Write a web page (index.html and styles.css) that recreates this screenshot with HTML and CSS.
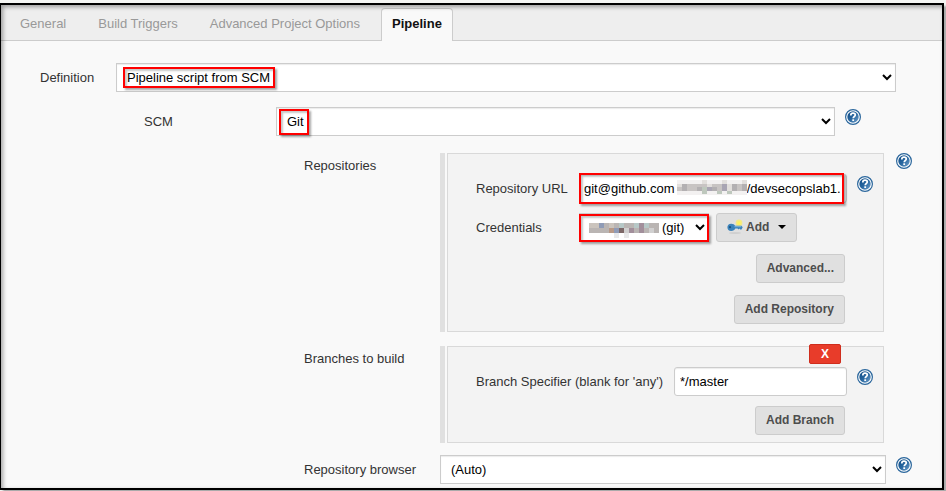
FILE: index.html
```html
<!DOCTYPE html>
<html lang="en">
<head>
<meta charset="utf-8">
<title>Pipeline configuration</title>
<link rel="stylesheet" href="styles.css">
</head>
<body>
<svg class="defs" aria-hidden="true">
  <defs>
    <linearGradient id="disc" x1="0" y1="0" x2="1" y2="1">
      <stop offset="0" stop-color="#0f4a83"/>
      <stop offset="0.5" stop-color="#2867a0"/>
      <stop offset="1" stop-color="#75a3cc"/>
    </linearGradient>
    <symbol id="help" viewBox="0 0 16 16">
      <circle cx="8" cy="8" r="7.4" fill="#fff" stroke="#2a669c" stroke-width="1.2"/>
      <circle cx="8" cy="8" r="5.7" fill="url(#disc)"/>
      <path d="M5.8 6.400C5.800 4.900 6.700 4.200 8 4.200s2.300.7 2.300 1.900C10.300 7.400 8.200 7.600 8.200 9.200" fill="none" stroke="#fff" stroke-width="1.700"/>
      <rect x="7.300" y="10.300" width="1.800" height="1.700" fill="#fff"/>
    </symbol>
  </defs>
</svg>
<main class="frame">
  <nav class="tabs">
    <a class="tab" href="#general">General</a>
    <a class="tab" href="#triggers">Build Triggers</a>
    <a class="tab" href="#advanced">Advanced Project Options</a>
    <a class="tab active" href="#pipeline">Pipeline</a>
  </nav>
  <form class="form">
    <div class="row definition">
      <label for="definition">Definition</label>
      <div class="field">
        <select id="definition"><option>Pipeline script from SCM</option></select>
        <span class="mark mark-definition"></span>
      </div>
    </div>
    <div class="row scm">
      <label for="scm">SCM</label>
      <div class="field">
        <select id="scm"><option>Git</option></select>
        <span class="mark mark-scm"></span>
      </div>
      <button class="help" type="button" aria-label="Help"><svg><use href="#help"/></svg></button>
    </div>

    <div class="row section">
      <span class="section-label">Repositories</span>
      <div class="chunk">
        <div class="box">
          <div class="line">
            <label class="fixed" for="url">Repository URL</label>
            <div class="field grow">
              <input id="url" class="url" type="text" value="git@github.com                    /devsecopslab1.">
              <svg class="mosaic mosaic-url" viewBox="0 0 70 15" shape-rendering="crispEdges" aria-hidden="true">
                <path fill="#f3f1f1" d="M0 0h70v15H0z"/>
                <path fill="#c8c4c3" d="M0 4h70v7H0z"/>
                <path fill="#e2dfdc" d="M0 4h5v3H0zM30 4h5v3h-5zM50 4h5v7h-5zM25 0h5v4h-5zM65 0h5v4h-5zM45 0h5v4h-5z"/>
                <path fill="#b3b0b2" d="M5 4h5v7H5zM20 7h5v4h-5zM35 7h5v4h-5zM55 4h5v7h-5zM65 4h5v7h-5z"/>
                <path fill="#bec8bd" d="M25 7h5v7h-5zM40 11h5v3h-5zM50 11h5v3h-5z"/>
                <path fill="#a9a5b3" d="M30 7h5v4h-5zM45 4h5v7h-5z"/>
              </svg>
              <span class="mark mark-url"></span>
            </div>
            <button class="help" type="button" aria-label="Help"><svg><use href="#help"/></svg></button>
          </div>
          <div class="line">
            <label class="fixed" for="credentials">Credentials</label>
            <div class="field">
              <select id="credentials" class="credentials"><option>(git)</option></select>
              <svg class="mosaic mosaic-credentials" viewBox="0 0 70 15" shape-rendering="crispEdges" aria-hidden="true">
                <path fill="#bab5b3" d="M0 0h70v10H0z"/>
                <path fill="#cbc4bd" d="M0 0h10v5H0zM20 0h5v5h-5zM45 0h5v5h-5z"/>
                <path fill="#8f9bb6" d="M10 0h5v5h-5zM25 5h5v5h-5z"/>
                <path fill="#b89987" d="M20 5h5v5h-5z"/>
                <path fill="#7d6868" d="M30 5h5v5h-5z"/>
                <path fill="#b7c8c7" d="M30 0h5v5h-5zM45 0h5v5h-5zM55 0h5v5h-5z"/>
                <path fill="#a28f9b" d="M40 5h5v5h-5zM50 0h5v10h-5z"/>
                <path fill="#d1d0d0" d="M35 5h5v5h-5zM60 5h5v5h-5z"/>
                <path fill="#e9e9ea" d="M25 10h5v5h-5zM35 10h5v5h-5z"/>
              </svg>
              <span class="mark mark-credentials"></span>
            </div>
            <button class="button add" type="button">
              <svg class="key" viewBox="0 0 16 16" aria-hidden="true">
                <ellipse cx="8" cy="14" rx="6" ry="1" fill="#cfcfcf"/>
                <circle cx="12" cy="4" r="3.400" fill="#f3ea86"/>
                <circle cx="12" cy="4" r="1.800" fill="#fff25a"/>
                <path d="M4.200 4.700c2 0 3.300.9 3.900 2.100H14.500l1.200 1.400-1.200 2.200h-1.300l-.8-.8-.9.8-.9-.8H8.300c-.6 1.500-2 2.400-4.100 2.400C1.700 12 .4 10.400.4 8.300s1.300-3.600 3.800-3.600z" fill="#3b83ba"/>
                <path d="M7.500 7.700h6.800" stroke="#7fb4d9"/>
                <circle cx="3" cy="8.200" r="1.100" fill="#1d527e"/>
              </svg>
              <span>Add</span>
              <svg class="caret" viewBox="0 0 8 4" aria-hidden="true"><path d="M0 0h8L4 4z"/></svg>
            </button>
          </div>
          <div class="actions">
            <button class="button" type="button">Advanced...</button>
            <button class="button" type="button">Add Repository</button>
          </div>
        </div>
      </div>
      <button class="help" type="button" aria-label="Help"><svg><use href="#help"/></svg></button>
    </div>

    <div class="row section">
      <span class="section-label">Branches to build</span>
      <div class="chunk">
        <div class="box">
          <button class="delete" type="button">X</button>
          <div class="line">
            <label for="branch">Branch Specifier (blank for 'any')</label>
            <div class="field grow"><input id="branch" type="text" value="*/master"></div>
            <button class="help" type="button" aria-label="Help"><svg><use href="#help"/></svg></button>
          </div>
          <div class="actions branch-actions">
            <button class="button" type="button">Add Branch</button>
          </div>
        </div>
      </div>
    </div>

    <div class="row section browser">
      <label for="browser">Repository browser</label>
      <div class="field"><select id="browser"><option>(Auto)</option></select></div>
      <button class="help" type="button" aria-label="Help"><svg><use href="#help"/></svg></button>
    </div>
  </form>
</main>
</body>
</html>
```
FILE: styles.css
```css
* {
  box-sizing: border-box;
}

body {
  margin: 0;
  min-height: 100vh;
  display: flex;
  flex-direction: column;
  background: #f4f5f3;
  color: #333;
  font: 13px/16px "Liberation Sans", Arial, sans-serif;
}

.defs {
  position: absolute;
  width: 0;
  height: 0;
}

.frame {
  position: relative;
  flex: 1;
  margin: 3px 2px 1px 0;
  border: 2px solid #000;
  border-left-width: 1px;
  background: #f9f9f9;
  box-shadow: 3px 3px 2px #aaa;
}

/* Shade cast inward by the top and left edges */
.frame::after {
  content: "";
  position: absolute;
  inset: 0;
  box-shadow: inset 2px 2px 4px rgba(0, 0, 0, 0.35);
  pointer-events: none;
}

.tabs {
  display: flex;
  height: 36px;
  padding: 3px 0 0 3px;
  border-bottom: 1px solid #ccc;
  background: #eee;
}

.tab {
  height: 33px;
  padding: 7px 15px 0;
  border: 1px solid transparent;
  border-bottom: 0;
  border-radius: 4px 4px 0 0;
  color: #999;
  text-decoration: none;
}

.tab.active {
  margin-left: 5px;
  padding: 7px 10px 0;
  border-color: #ccc;
  background: #f9f9f9;
  color: #111;
  font-weight: bold;
}

.form {
  padding: 22px 30px 4px 39px;
}

.row {
  display: grid;
  align-items: center;
}

.definition {
  grid-template-columns: 76px 1fr;
  margin-right: 16px;
}

.scm {
  grid-template-columns: 132px 1fr 16px;
  margin: 15px 51px 17px 104px;
}

.section {
  grid-template-columns: 136px 1fr 16px;
  align-items: start;
  margin: 0 0 14px 264px;
}

.section-label {
  padding-top: 5px;
}

.browser {
  align-items: center;
  margin-top: -2px;
  margin-bottom: 0;
}

.field {
  position: relative;
  min-width: 0;
}

.scm .field,
.browser .field {
  margin-right: 10px;
}

select,
input {
  display: block;
  width: 100%;
  height: 29px;
  border: 1px solid #ccc;
  background: #fff;
  color: #000;
  font: inherit;
  box-shadow: inset 0 1px 1px rgba(0, 0, 0, 0.08);
}

select {
  border-radius: 0;
  padding: 0 0 0 6px;
}

input {
  border-radius: 3px;
  padding: 0 5px;
}

input.url {
  padding: 0 4px;
}

select.credentials {
  width: 130px;
  padding-left: 78px;
}

.help {
  display: block;
  flex: none;
  width: 16px;
  height: 16px;
  padding: 0;
  border: 0;
  background: none;
}

.help svg {
  display: block;
  width: 16px;
  height: 16px;
}

.scm .help,
.line .help,
.browser .help {
  align-self: start;
  margin-top: 2px;
}

.chunk {
  margin-right: 12px;
  padding-left: 2px;
  border-left: 5px solid #e0e0e0;
}

.box {
  position: relative;
  padding: 20px 10px 7px 28px;
  border: 1px solid #d9d9d9;
  background: #f3f3f3;
}

.line {
  display: flex;
  align-items: center;
  margin-bottom: 10px;
}

.line .fixed {
  width: 103px;
}

.line .grow {
  flex: 1;
  margin-right: 10px;
  margin-left: 0;
}

label[for="branch"] {
  margin-right: 11px;
}

.actions {
  display: flex;
  flex-direction: column;
  align-items: flex-end;
  gap: 12px;
  margin: 12px 28px 0 0;
}

.branch-actions {
  margin-top: 10px;
}

.button {
  height: 29px;
  padding: 0 10px 1px;
  border: 1px solid #ccc;
  border-radius: 3px;
  background: #e0e0e0;
  color: #4d4d4d;
  font: bold 12px/16px "Liberation Sans", Arial, sans-serif;
}

.add {
  display: flex;
  align-items: center;
  margin-left: 7px;
}

.key {
  width: 16px;
  height: 16px;
  margin-right: 3px;
}

.caret {
  width: 8px;
  height: 4px;
  margin-left: 9px;
}

.delete {
  position: absolute;
  top: -3px;
  right: 42px;
  width: 32px;
  height: 20px;
  padding: 0;
  border: 1px solid #cf2d1d;
  border-radius: 2px;
  background: #e83c2a;
  color: #fff;
  font: bold 12px/16px "Liberation Sans", Arial, sans-serif;
}

/* Red call-outs over the fields */
.mark {
  position: absolute;
  border: 2px solid #f00;
  box-shadow: 2px 2px 2px rgba(0, 0, 0, 0.35), inset 2px 2px 2px rgba(0, 0, 0, 0.22);
  pointer-events: none;
}

.mark-definition {
  top: 4px;
  left: 7px;
  width: 152px;
  height: 21px;
}

.mark-scm {
  top: 2px;
  left: 3px;
  width: 30px;
  height: 26px;
}

.mark-url {
  inset: -1px 3px -1px 0;
}

.mark-credentials {
  inset: 1px 0 0;
}

.mosaic {
  position: absolute;
  width: 70px;
  height: 15px;
}

.mosaic-url {
  top: 6px;
  left: 98px;
}

.mosaic-credentials {
  top: 10px;
  left: 10px;
}
```
